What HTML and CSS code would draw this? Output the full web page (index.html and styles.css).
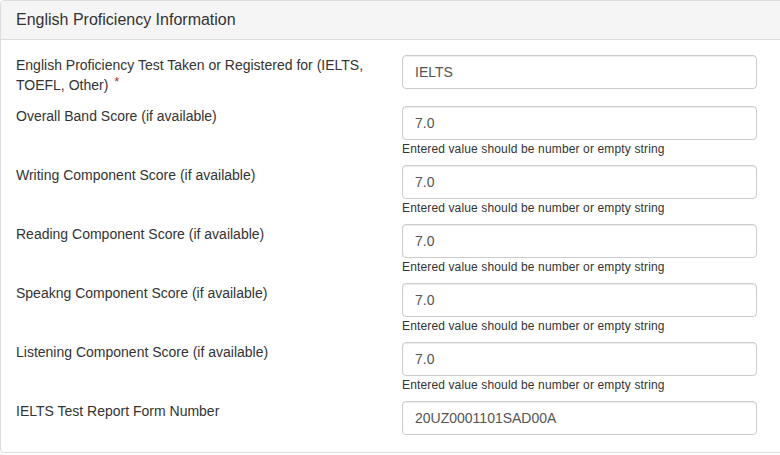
FILE: index.html
```html
<!DOCTYPE html>
<html lang="en">
<head>
<meta charset="utf-8">
<title>English Proficiency Information</title>
<link rel="stylesheet" href="styles.css">
</head>
<body>
<div class="panel">
  <div class="panel-heading">
    <h3 class="panel-title">English Proficiency Information</h3>
  </div>
  <div class="panel-body">
    <div class="form-group">
      <label class="control-label">English Proficiency Test Taken or Registered for (IELTS, TOEFL, Other)<span class="req">*</span></label>
      <div class="field">
        <input class="form-control" type="text" value="IELTS">
      </div>
    </div>
    <div class="form-group">
      <label class="control-label">Overall Band Score (if available)</label>
      <div class="field">
        <input class="form-control" type="text" value="7.0">
        <span class="help-block">Entered value should be number or empty string</span>
      </div>
    </div>
    <div class="form-group">
      <label class="control-label">Writing Component Score (if available)</label>
      <div class="field">
        <input class="form-control" type="text" value="7.0">
        <span class="help-block">Entered value should be number or empty string</span>
      </div>
    </div>
    <div class="form-group">
      <label class="control-label">Reading Component Score (if available)</label>
      <div class="field">
        <input class="form-control" type="text" value="7.0">
        <span class="help-block">Entered value should be number or empty string</span>
      </div>
    </div>
    <div class="form-group">
      <label class="control-label">Speakng Component Score (if available)</label>
      <div class="field">
        <input class="form-control" type="text" value="7.0">
        <span class="help-block">Entered value should be number or empty string</span>
      </div>
    </div>
    <div class="form-group">
      <label class="control-label">Listening Component Score (if available)</label>
      <div class="field">
        <input class="form-control" type="text" value="7.0">
        <span class="help-block">Entered value should be number or empty string</span>
      </div>
    </div>
    <div class="form-group last">
      <label class="control-label">IELTS Test Report Form Number</label>
      <div class="field">
        <input class="form-control" type="text" value="20UZ0001101SAD00A">
      </div>
    </div>
  </div>
</div>
</body>
</html>
```

FILE: styles.css
```css
html, body {
  margin: 0;
  padding: 0;
  overflow: hidden;
  background: #fff;
}

body {
  font-family: "Liberation Sans", Arial, sans-serif;
  font-size: 14px;
  line-height: 20px;
  color: #333;
}

.panel {
  width: 786px;
  border: 1px solid #ddd;
  border-radius: 4px;
  background: #fff;
  box-sizing: border-box;
}

.panel-heading {
  background: #f5f5f5;
  border-bottom: 1px solid #ddd;
  border-radius: 3px 3px 0 0;
  padding: 10px 15px;
}

.panel-title {
  margin: 0;
  font-size: 16px;
  font-weight: normal;
  line-height: 18px;
  color: #333;
}

.panel-body {
  padding: 15px;
}

.form-group {
  display: grid;
  grid-template-columns: 356px 355px;
  column-gap: 30px;
  margin-bottom: 6px;
}

.form-group.last {
  margin-bottom: 2px;
}

.control-label {
  display: block;
  margin-bottom: 5px;
  font-weight: normal;
  line-height: 20px;
}

.req {
  display: inline-block;
  margin-left: 6px;
  color: #b03a37;
  font-size: 13px;
  line-height: 14px;
  vertical-align: top;
}

.form-control {
  display: block;
  width: 100%;
  height: 34px;
  box-sizing: border-box;
  padding: 6px 12px;
  margin: 0;
  font-family: "Liberation Sans", Arial, sans-serif;
  font-size: 14px;
  line-height: 20px;
  color: #555;
  background: #fff;
  border: 1px solid #ccc;
  border-radius: 4px;
  box-shadow: inset 0 1px 1px rgba(0, 0, 0, 0.075);
}

.help-block {
  display: block;
  margin: 1px 0 1px;
  font-size: 12px;
  line-height: 17px;
  color: #333;
  letter-spacing: 0.14px;
}
```
